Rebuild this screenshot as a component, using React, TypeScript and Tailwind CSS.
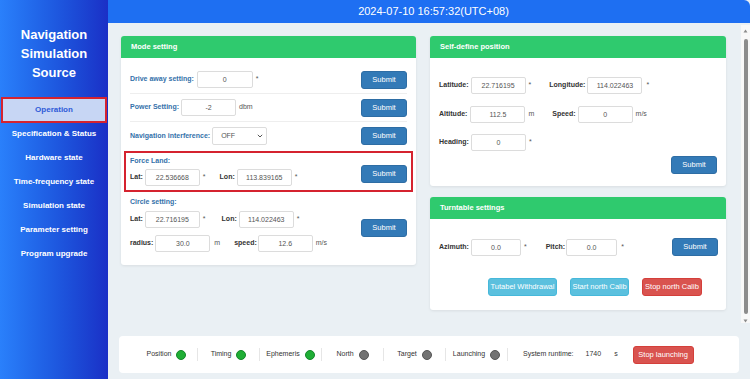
import React from "react";

const NAV = [
  "Operation",
  "Specification & Status",
  "Hardware state",
  "Time-frequency state",
  "Simulation state",
  "Parameter setting",
  "Program upgrade",
];

const STATUS = [
  { name: "Position", on: true },
  { name: "Timing", on: true },
  { name: "Ephemeris", on: true },
  { name: "North", on: false },
  { name: "Target", on: false },
  { name: "Launching", on: false },
];

const blueLabel = "text-[7px] font-bold text-[#3471aa] whitespace-nowrap";
const darkLabel = "text-[7px] font-bold text-[#333] whitespace-nowrap";
const unitClass = "text-[7px] text-[#555] whitespace-nowrap";
const inputClass =
  "h-[17px] border border-[#dcdcdc] rounded-[2px] bg-white text-center text-[7px] text-[#555] outline-none";
const btnBase =
  "h-[18px] rounded-[3px] border text-white text-[7.5px] flex items-center justify-center whitespace-nowrap";
const submitClass = btnBase + " w-[46px] bg-[#337ab7] border-[#2e6da4]";

function Field({ value, className }: { value: string; className: string }) {
  return <input readOnly value={value} className={inputClass + " " + className} />;
}

function Submit({ className = "" }: { className?: string }) {
  return <button className={submitClass + " " + className}>Submit</button>;
}

function PanelHead({ title }: { title: string }) {
  return (
    <div className="h-[22px] bg-[#2fca6e] rounded-t-[3px] px-[10px] flex items-center text-white font-bold text-[7.5px]">
      {title}
    </div>
  );
}

function Sidebar() {
  return (
    <aside className="w-[108px] shrink-0 h-full bg-gradient-to-r from-[#2a80fb] to-[#1b2fc6] flex flex-col">
      <div className="pt-[25px] mb-[16px] text-center text-white font-bold text-[13px] leading-[19px]">
        Navigation
        <br />
        Simulation
        <br />
        Source
      </div>
      <nav className="flex flex-col">
        {NAV.map((n, i) =>
          i === 0 ? (
            <div
              key={n}
              className="h-[26px] -my-[1px] mx-[1px] border-2 border-[#d5232f] bg-[#c7d6f4] flex items-center justify-center text-[8px] font-bold text-[#2e5bd8]"
            >
              {n}
            </div>
          ) : (
            <div key={n} className="h-[24px] flex items-center justify-center text-[8px] font-bold text-white whitespace-nowrap">
              {n}
            </div>
          )
        )}
      </nav>
    </aside>
  );
}

function ModePanel() {
  return (
    <div className="w-[295px] self-start bg-white rounded-[3px] shadow-[0_1px_3px_rgba(0,0,0,0.08)]">
      <PanelHead title="Mode setting" />
      <div className="px-[9px] pt-[8px] pb-[13px]">
        {/* Drive away */}
        <div className="h-[28px] flex items-center justify-between border-b border-[#eeeeee]">
          <div className="flex items-center">
            <span className={blueLabel}>Drive away setting:</span>
            <Field value="0" className="w-[56px] ml-[3px]" />
            <span className={unitClass + " ml-[3px]"}>*</span>
          </div>
          <Submit />
        </div>
        {/* Power */}
        <div className="h-[28px] flex items-center justify-between border-b border-[#eeeeee]">
          <div className="flex items-center">
            <span className={blueLabel}>Power Setting:</span>
            <Field value="-2" className="w-[55px] ml-[2px]" />
            <span className={unitClass + " ml-[3px]"}>dbm</span>
          </div>
          <Submit />
        </div>
        {/* Navigation interference */}
        <div className="h-[28px] flex items-center justify-between">
          <div className="flex items-center">
            <span className={blueLabel}>Navigation interference:</span>
            <div className="ml-[2px] w-[55px] h-[18px] border border-[#dcdcdc] rounded-[2px] flex items-center justify-between pl-[8px] pr-[3px] text-[7px] text-[#555]">
              OFF
              <svg width="6" height="4" viewBox="0 0 6 4">
                <path d="M0.8 0.8 L3 3 L5.2 0.8" fill="none" stroke="#555" strokeWidth="1" />
              </svg>
            </div>
          </div>
          <Submit />
        </div>
        {/* Force Land */}
        <div className="mt-[1px] -mx-[6px] h-[41px] border-2 border-[#d5232f] px-[4px] flex items-end justify-between pb-[4px]">
          <div className="flex flex-col">
            <div className={blueLabel + " leading-[10px]"}>Force Land:</div>
            <div className="mt-[3px] flex items-center">
              <span className={darkLabel}>Lat:</span>
              <Field value="22.536668" className="w-[55px] ml-[2px]" />
              <span className={unitClass + " ml-[3px]"}>*</span>
              <span className={darkLabel + " ml-[14px]"}>Lon:</span>
              <Field value="113.839165" className="w-[55px] ml-[2px]" />
              <span className={unitClass + " ml-[3px]"}>*</span>
            </div>
          </div>
          <Submit className="mb-[3px]" />
        </div>
        {/* Circle */}
        <div className="flex items-end justify-between">
          <div className="flex flex-col">
            <div className={blueLabel + " leading-[10px] mt-[5px]"}>Circle setting:</div>
            <div className="mt-[4px] flex items-center">
              <span className={darkLabel}>Lat:</span>
              <Field value="22.716195" className="w-[55px] ml-[2px]" />
              <span className={unitClass + " ml-[3px]"}>*</span>
              <span className={darkLabel + " ml-[16px]"}>Lon:</span>
              <Field value="114.022463" className="w-[55px] ml-[2px]" />
              <span className={unitClass + " ml-[3px]"}>*</span>
            </div>
            <div className="mt-[7px] flex items-center">
              <span className={darkLabel}>radius:</span>
              <Field value="30.0" className="w-[55px] ml-[2px]" />
              <span className={unitClass + " ml-[4px]"}>m</span>
              <span className={darkLabel + " ml-[14px]"}>speed:</span>
              <Field value="12.6" className="w-[55px] ml-[1px]" />
              <span className={unitClass + " ml-[3px]"}>m/s</span>
            </div>
          </div>
          <Submit className="mb-[15px]" />
        </div>
      </div>
    </div>
  );
}

function SelfDefinePanel() {
  return (
    <div className="bg-white rounded-[3px] shadow-[0_1px_3px_rgba(0,0,0,0.08)]">
      <PanelHead title="Self-define position" />
      <div className="px-[9px] pt-[19px] pb-[12px]">
        <div className="flex items-center">
          <span className={darkLabel}>Latitude:</span>
          <Field value="22.716195" className="w-[55px] ml-[2px]" />
          <span className={unitClass + " ml-[3px]"}>*</span>
          <span className={darkLabel + " ml-[18px]"}>Longitude:</span>
          <Field value="114.022463" className="w-[55px] ml-[2px]" />
          <span className={unitClass + " ml-[4px]"}>*</span>
        </div>
        <div className="mt-[12px] flex items-center">
          <span className={darkLabel}>Altitude:</span>
          <Field value="112.5" className="w-[55px] ml-[3px]" />
          <span className={unitClass + " ml-[3px]"}>m</span>
          <span className={darkLabel + " ml-[18px]"}>Speed:</span>
          <Field value="0" className="w-[55px] ml-[2px]" />
          <span className={unitClass + " ml-[3px]"}>m/s</span>
        </div>
        <div className="mt-[11px] flex items-center">
          <span className={darkLabel}>Heading:</span>
          <Field value="0" className="w-[55px] ml-[2px]" />
          <span className={unitClass + " ml-[3px]"}>*</span>
        </div>
        <div className="mt-[5px] flex justify-end">
          <Submit />
        </div>
      </div>
    </div>
  );
}

function TurntablePanel() {
  return (
    <div className="bg-white rounded-[3px] shadow-[0_1px_3px_rgba(0,0,0,0.08)]">
      <PanelHead title="Turntable settings" />
      <div className="px-[8px] pl-[9px] pt-[19px] pb-[14px]">
        <div className="flex items-center justify-between">
          <div className="flex items-center">
            <span className={darkLabel}>Azimuth:</span>
            <Field value="0.0" className="w-[50px] ml-[2px]" />
            <span className={unitClass + " ml-[3px]"}>*</span>
            <span className={darkLabel + " ml-[19px]"}>Pitch:</span>
            <Field value="0.0" className="w-[51px] ml-[1px]" />
            <span className={unitClass + " ml-[4px]"}>*</span>
          </div>
          <Submit />
        </div>
        <div className="mt-[22px] flex justify-end gap-[13px] pr-[16px]">
          <button className={btnBase + " w-[69px] bg-[#5bc0de] border-[#46b8da]"}>Tutabel Withdrawal</button>
          <button className={btnBase + " w-[59px] bg-[#5bc0de] border-[#46b8da]"}>Start north Calib</button>
          <button className={btnBase + " w-[60px] bg-[#d9534f] border-[#d43f3a]"}>Stop north Calib</button>
        </div>
      </div>
    </div>
  );
}

function Scrollbar() {
  return (
    <div className="w-[9px] mt-[2px] bg-[#f8f8f8] flex flex-col items-center">
      <svg width="5" height="4" viewBox="0 0 5 4" className="mt-[4px]">
        <path d="M2.5 0.5 L4.5 3.5 L0.5 3.5 Z" fill="#8a8a8a" />
      </svg>
      <div className="mt-[6px] w-[4px] h-[276px] rounded-full bg-[#8c8c8c]" />
      <svg width="5" height="4" viewBox="0 0 5 4" className="mt-[5px]">
        <path d="M0.5 0.5 L4.5 0.5 L2.5 3.5 Z" fill="#8a8a8a" />
      </svg>
    </div>
  );
}

function StatusBar() {
  return (
    <div className="h-[37px] bg-white rounded-[4px] flex items-center pl-[17px] text-[7px] text-[#333]">
      {STATUS.map((s) => (
        <React.Fragment key={s.name}>
          <div className="w-[61px] flex items-center justify-center gap-[5px]">
            <span>{s.name}</span>
            <span
              className={
                s.on
                  ? "w-[10px] h-[10px] rounded-full bg-[#1fae35] border border-[#13872a]"
                  : "w-[10px] h-[10px] rounded-full bg-[#727272] border border-[#555]"
              }
            />
          </div>
          <div className="w-px h-[13px] bg-[#e6e6e6]" />
        </React.Fragment>
      ))}
      <span className="ml-[15px]">System runtime:</span>
      <span className="ml-[12px]">1740</span>
      <span className="ml-[13px]">s</span>
      <button className={btnBase + " ml-[15px] w-[61px] h-[17px] bg-[#d9534f] border-[#d43f3a]"}>Stop launching</button>
    </div>
  );
}

export default function App() {
  return (
    <div className="flex w-[750px] h-[379px] overflow-hidden bg-[#eaf0f4] font-['Liberation_Sans',Arial,sans-serif]">
      <Sidebar />
      <div className="flex-1 flex flex-col min-w-0">
        <header className="h-[23px] shrink-0 bg-[#1e6ff2] rounded-tr-[6px] flex items-center justify-center pl-[9px] text-white text-[11px]">
          2024-07-10 16:57:32(UTC+08)
        </header>
        <div className="h-[300px] flex">
          <div className="flex-1 flex gap-[14px] pl-[13px] pt-[13px]">
            <ModePanel />
            <div className="w-[296px] flex flex-col gap-[11px]">
              <SelfDefinePanel />
              <TurntablePanel />
            </div>
          </div>
          <Scrollbar />
        </div>
        <div className="flex-1 pt-[13px] px-[11px]">
          <StatusBar />
        </div>
      </div>
    </div>
  );
}
